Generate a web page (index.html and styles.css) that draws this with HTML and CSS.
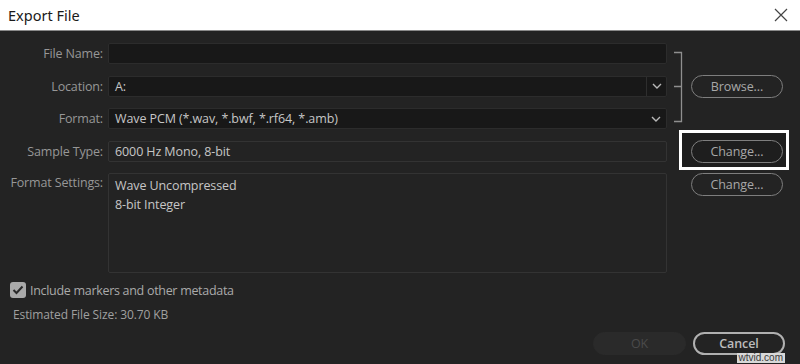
FILE: index.html
```html
<!DOCTYPE html>
<html>
<head>
<meta charset="utf-8">
<link rel="stylesheet" href="styles.css">
</head>
<body>
<div class="titlebar">
  <span class="title">Export File</span>
  <svg class="close" width="14" height="14" viewBox="0 0 14 14"><path d="M1 1L13 13M13 1L1 13" stroke="#444" stroke-width="1.2" fill="none"/></svg>
</div>
<div class="dialog">
  <div class="form">
    <label class="lbl r1">File Name:</label>
    <div class="field dark r1"></div>

    <label class="lbl r2">Location:</label>
    <div class="field dark select split r2"><span class="val">A:</span><span class="drop"><svg width="10" height="6" viewBox="0 0 10 6"><path d="M1 1L5 5L9 1" stroke="#b8b8b8" stroke-width="1.4" fill="none"/></svg></span></div>

    <label class="lbl r3">Format:</label>
    <div class="field dark select r3"><span class="val">Wave PCM (*.wav, *.bwf, *.rf64, *.amb)</span><span class="drop"><svg width="10" height="6" viewBox="0 0 10 6"><path d="M1 1L5 5L9 1" stroke="#b8b8b8" stroke-width="1.4" fill="none"/></svg></span></div>

    <svg class="bracket" width="24" height="85" viewBox="0 0 24 85"><path d="M7 9.5H14.5V78.5H7M7 43.5H14.5" stroke="#8f8f8f" stroke-width="1.3" fill="none"/></svg>

    <div class="btncell r2"><button class="pill">Browse...</button></div>

    <label class="lbl r4">Sample Type:</label>
    <div class="field flat r4"><span class="val">6000 Hz Mono, 8-bit</span></div>
    <div class="btncell r4 hl"><button class="pill">Change...</button></div>

    <label class="lbl r5 top">Format Settings:</label>
    <div class="field flat area r5"><span class="line">Wave Uncompressed</span><span class="line">8-bit Integer</span></div>
    <div class="btncell r5 top"><button class="pill">Change...</button></div>
  </div>

  <div class="check">
    <span class="box"><svg width="12" height="10" viewBox="0 0 12 10"><path d="M1.5 5L4.5 8L10.5 1.5" stroke="#2a2a2a" stroke-width="2" fill="none"/></svg></span>
    <span>Include markers and other metadata</span>
  </div>
  <div class="est">Estimated File Size: 30.70 KB</div>

  <div class="footer">
    <button class="pill ok">OK</button>
    <button class="pill cancel">Cancel</button>
  </div>
</div>
<div class="wm">wtvid.com</div>
</body>
</html>
```
FILE: styles.css
```css
* { box-sizing: border-box; }
html, body { margin: 0; padding: 0; }
body {
  position: relative;
  width: 800px; height: 364px; overflow: hidden;
  background: #232323;
  font-family: "Open Sans", "Noto Sans", sans-serif;
}
.titlebar {
  height: 31px; background: #fff; border-bottom: 1px solid #8a8a8a;
  display: flex; align-items: center; justify-content: space-between;
  padding: 0 12px 1px 8px;
}
.title { font-size: 14.5px; color: #1a1a1a; font-family: "Noto Sans", "Open Sans", sans-serif; }
.close { display: block; }
.dialog { padding-top: 12px; }
.form {
  display: grid;
  grid-template-columns: 108px 559px 24px 92px;
  grid-template-rows: 21px 21px 21px 21px 100px;
  row-gap: 11.5px;
}
.r1 { grid-row: 1; } .r2 { grid-row: 2; } .r3 { grid-row: 3; } .r4 { grid-row: 4; } .r5 { grid-row: 5; }
.lbl {
  grid-column: 1; text-align: right; padding-right: 5px;
  font-size: 12.5px; color: #979797;
  line-height: 21px; white-space: nowrap; letter-spacing: -0.15px;
}
.lbl.top { line-height: 20px; }
.field {
  grid-column: 2;
  border: 1px solid #2f2f2f; border-radius: 2px;
  display: flex; align-items: center; padding-left: 6px;
  font-size: 12.5px; color: #c6c6c6; letter-spacing: -0.1px;
}
.field.dark { background: #181818; border-color: #2c2c2c; }
.field.flat { background: #232323; border-color: #333; }
.field.area { flex-direction: column; align-items: flex-start; justify-content: flex-start; padding-top: 2px; }
.line { display: block; line-height: 19px; white-space: nowrap; }
.val { flex: 1; white-space: nowrap; }
.select .drop { width: 20px; height: 100%; display: flex; align-items: center; justify-content: center; }
.split .drop { border-left: 1px solid #2e2e2e; }
.bracket { grid-column: 3; grid-row: 1 / 4; display: block; }
.btncell { grid-column: 4; display: flex; align-items: center; position: relative; }
.btncell.top { align-items: flex-start; }
.pill {
  width: 92px; height: 23px; border-radius: 12px;
  background: transparent; border: 1.5px solid #7e7e7e;
  color: #a8a8a8; font-family: "Open Sans", "Noto Sans", sans-serif;
  font-size: 12.5px; padding: 0; line-height: 19px; letter-spacing: -0.1px;
}
.hl::before {
  content: ""; position: absolute;
  left: -12px; right: -6px; top: -11px; bottom: -8px;
  border: 3px solid #fff; background: #1e1e1e; z-index: 0;
}
.hl .pill { position: relative; z-index: 1; }
.check {
  display: flex; align-items: center; gap: 4px;
  margin: 9px 0 0 10px; font-size: 12.5px; color: #aaa; height: 16px;
  letter-spacing: -0.3px;
}
.box {
  width: 16px; height: 16px; border-radius: 3px; background: #a9a9a9;
  display: flex; align-items: center; justify-content: center;
}
.est { margin: 9px 0 0 13px; font-size: 12px; color: #a0a0a0; height: 16px; line-height: 16px; letter-spacing: -0.1px; }
.footer {
  display: flex; justify-content: flex-end; gap: 7px;
  padding-right: 15px; margin-top: 9px;
}
.ok { background: #2a2a2a; border-color: #2a2a2a; color: #4a4a4a; height: 23px; width: 93px; }
.cancel { border: 2px solid #b0b0b0; color: #bcbcbc; font-weight: 600; width: 92px; }
.wm {
  position: absolute; right: 15px; bottom: 1px;
  font-size: 10px; color: #3a3a3a; background: #d8d8d8; padding: 0 2px; line-height: 10px;
  font-family: "Liberation Sans", sans-serif;
}
```
